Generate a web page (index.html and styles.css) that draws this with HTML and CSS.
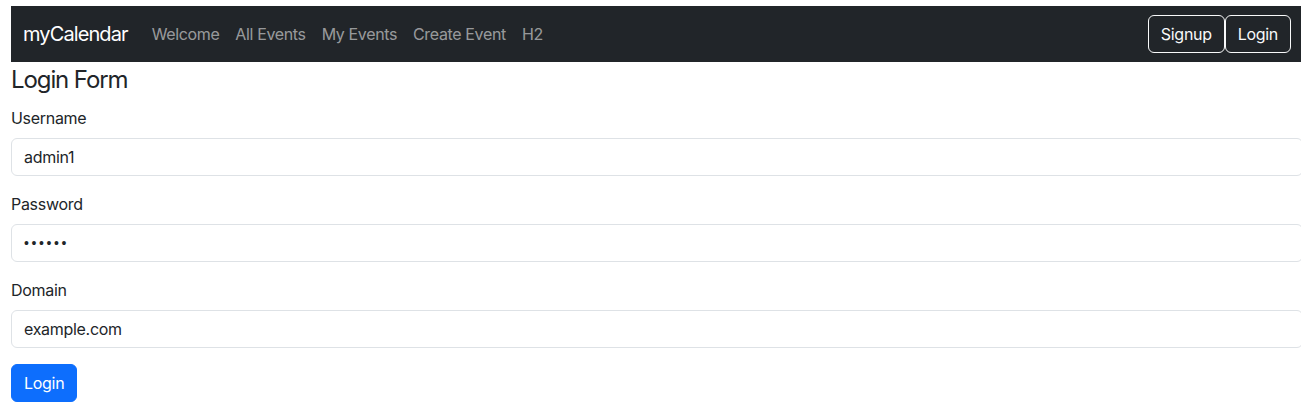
FILE: index.html
```html
<!DOCTYPE html>
<html lang="en">
<head>
<meta charset="utf-8">
<title>myCalendar - Login</title>
<link rel="stylesheet" href="styles.css">
</head>
<body>
<div class="page">
  <nav class="navbar">
    <a class="brand" href="#">myCalendar</a>
    <ul class="nav">
      <li><a class="nav-link" href="#">Welcome</a></li>
      <li><a class="nav-link" href="#">All Events</a></li>
      <li><a class="nav-link" href="#">My Events</a></li>
      <li><a class="nav-link" href="#">Create Event</a></li>
      <li><a class="nav-link" href="#">H2</a></li>
    </ul>
    <div class="nav-actions">
      <button class="btn btn-outline-light" type="button">Signup</button>
      <button class="btn btn-outline-light" type="button">Login</button>
    </div>
  </nav>
  <main class="content">
    <h4 class="title">Login Form</h4>
    <form class="form">
      <div class="field">
        <label class="form-label" for="username">Username</label>
        <input class="form-control" id="username" type="text" value="admin1">
      </div>
      <div class="field">
        <label class="form-label" for="password">Password</label>
        <input class="form-control form-control-password" id="password" type="password" value="secret">
      </div>
      <div class="field">
        <label class="form-label" for="domain">Domain</label>
        <input class="form-control" id="domain" type="text" value="example.com">
      </div>
      <button class="btn btn-primary" type="button">Login</button>
    </form>
  </main>
</div>
</body>
</html>
```
FILE: styles.css
```css
* { box-sizing: border-box; }
html, body {
  margin: 0;
  padding: 0;
  overflow: hidden;
  background: #fff;
}
body {
  font-family: Inter, "Noto Sans", "Liberation Sans", sans-serif;
  font-size: 16px;
  line-height: 1.5;
  color: #212529;
}
.page {
  margin: 6px 0 0 11px;
  width: 1292px;
}
.navbar {
  display: flex;
  align-items: center;
  background: #212529;
  padding: 8px 12px;
  height: 56px;
}
.brand {
  font-size: 20px;
  line-height: 30px;
  padding: 5px 0;
  margin-right: 16px;
  color: #fff;
  text-decoration: none;
  letter-spacing: -0.9px;
}
.nav {
  display: flex;
  list-style: none;
  margin: 0;
  padding: 0;
}
.nav-link {
  display: block;
  padding: 8px;
  color: rgba(255, 255, 255, 0.55);
  text-decoration: none;
  letter-spacing: -0.36px;
}
.nav-actions {
  margin-left: auto;
  display: flex;
}
.btn {
  font-family: inherit;
  font-size: 16px;
  line-height: 24px;
  padding: 6px 12px;
  border-radius: 6px;
  border: 1px solid transparent;
  cursor: pointer;
  letter-spacing: -0.3px;
}
.btn-outline-light {
  background: transparent;
  color: #f8f9fa;
  border-color: #f8f9fa;
}
.btn-primary {
  background: #0d6efd;
  border-color: #0d6efd;
  color: #fff;
}
.title {
  font-size: 24px;
  font-weight: 400;
  line-height: 1.2;
  margin: 4px 0 11px;
  letter-spacing: -1.1px;
}
.field {
  margin-bottom: 16px;
}
.form-label {
  display: block;
  margin-bottom: 8px;
  letter-spacing: -0.3px;
}
.form-control {
  display: block;
  width: 100%;
  height: 38px;
  padding: 6px 12px;
  font-family: inherit;
  font-size: 16px;
  line-height: 24px;
  color: #212529;
  background: #fff;
  border: 1px solid #dee2e6;
  border-radius: 6px;
  letter-spacing: -0.3px;
}
.form-control-password {
  font-family: "Liberation Sans", Arial, sans-serif;
  font-size: 14px;
  letter-spacing: 2.6px;
  padding-left: 12px;
}
```
